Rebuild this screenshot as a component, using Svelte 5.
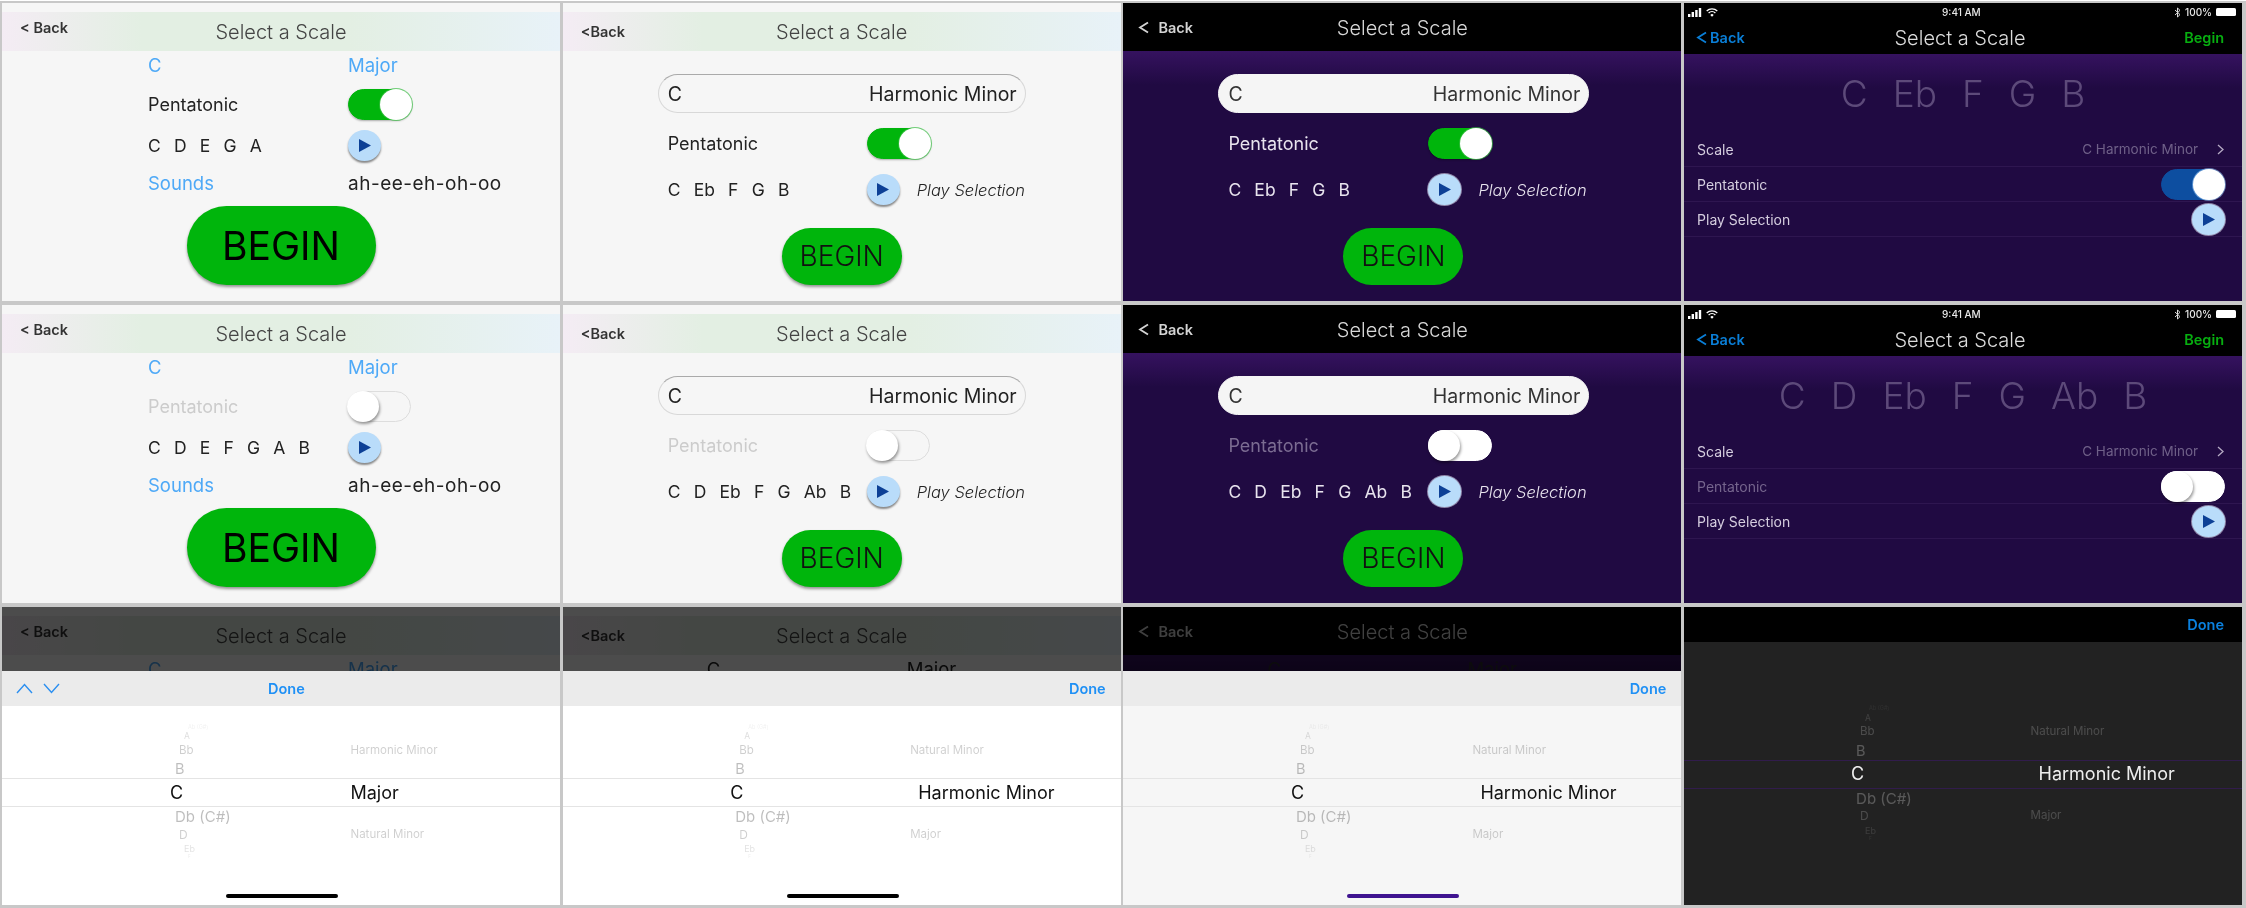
<script>
  const penta = ['C', 'Eb', 'F', 'G', 'B'];
  const full = ['C', 'D', 'Eb', 'F', 'G', 'Ab', 'B'];

  // picker wheel: rows shrink and drift right away from the selected row
  const wheelRows = [
    { h: 7, x: 186, size: 5.5, op: 0.06, note: 'Ab (G#)' },
    { h: 11, x: 182, size: 8.5, op: 0.14, note: 'A' },
    { h: 17, x: 177, size: 11.5, op: 0.2, note: 'Bb', slot: 'top' },
    { h: 21, x: 173, size: 14.5, op: 0.27, note: 'B' },
    { h: 25, x: 168, size: 18, op: 1, note: 'C', slot: 'mid' },
    { h: 23, x: 173, size: 15, op: 0.27, note: 'Db (C#)' },
    { h: 13, x: 177, size: 12, op: 0.2, note: 'D', slot: 'bottom' },
    { h: 15, x: 182, size: 9, op: 0.12, note: 'Eb' },
    { h: 3, x: 186, size: 4.5, op: 0.08, note: 'F' }
  ];

  const majorPick = { top: 'Harmonic Minor', mid: 'Major', bottom: 'Natural Minor', midX: 0 };
  const harmonicPick = { top: 'Natural Minor', mid: 'Harmonic Minor', bottom: 'Major', midX: 8 };
</script>

{#snippet play()}
  <span class="play">
    <svg width="14" height="15" viewBox="0 0 14 15"><polygon points="1,1 13,7.5 1,14" fill="#0d4096" /></svg>
  </span>
{/snippet}

{#snippet toggle(on)}
  <span class="toggle" class:on><span class="thumb"></span></span>
{/snippet}

{#snippet notes(list)}
  <span class="notes">
    {#each list as n}<span>{n}</span>{/each}
  </span>
{/snippet}

{#snippet chevronLeft()}
  <svg class="back-chev" width="11" height="13" viewBox="0 0 11 13" fill="none" stroke="currentColor" stroke-width="1.8"><path d="M10 1.5 2 6.5l8 5" /></svg>
{/snippet}

{#snippet nav(kind)}
  <header class="nav {kind}">
    {#if kind === 'spaced'}
      <span class="back raised">&lt; Back</span>
    {:else if kind === 'tight'}
      <span class="back">&lt;Back</span>
    {:else}
      <span class="back raised">{@render chevronLeft()}Back</span>
    {/if}
    <span class="title">Select a Scale</span>
  </header>
{/snippet}

{#snippet classic(list, on)}
  <section class="screen paper">
    {@render nav('spaced')}
    <div class="classic">
      <span class="link">C</span><span class="link">Major</span>
      <span class="label" class:off={!on}>Pentatonic</span>{@render toggle(on)}
      {@render notes(list)}{@render play()}
      <span class="link">Sounds</span><span class="label sounds">ah-ee-eh-oh-oo</span>
    </div>
    <div class="begin-wrap big-wrap"><button class="begin big">BEGIN</button></div>
  </section>
{/snippet}

{#snippet field(theme, list, on)}
  <section class="screen {theme}">
    {@render nav(theme === 'paper' ? 'tight' : 'dark')}
    <div class="form">
      <div class="field"><span>C</span><span>Harmonic Minor</span></div>
      <div class="form-row">
        <span class="label" class:off={!on}>Pentatonic</span>{@render toggle(on)}
      </div>
      <div class="form-row">
        {@render notes(list)}{@render play()}<em>Play Selection</em>
      </div>
    </div>
    <div class="begin-wrap"><button class="begin">BEGIN</button></div>
  </section>
{/snippet}

{#snippet native(list, on)}
  <section class="screen night native">
    <div class="status">
      <span class="status-left">
        <svg width="14" height="9" viewBox="0 0 14 9" fill="#fff"><rect x="0" y="6" width="2.4" height="3" /><rect x="3.6" y="4" width="2.4" height="5" /><rect x="7.2" y="2" width="2.4" height="7" /><rect x="10.8" y="0" width="2.4" height="9" /></svg>
        <svg width="12" height="9" viewBox="0 0 12 9" fill="none" stroke="#fff" stroke-width="1.3"><path d="M.7 3a7.6 7.6 0 0 1 10.6 0M2.6 5a5 5 0 0 1 6.8 0" /><path d="M6 8.8 4.3 6.9a2.4 2.4 0 0 1 3.4 0z" fill="#fff" stroke="none" /></svg>
      </span>
      <span class="time">9:41 AM</span>
      <span class="status-right">
        <svg width="7" height="11" viewBox="0 0 7 11" fill="none" stroke="#ddd" stroke-width="1"><path d="M1 3l5 4.6L3.5 10V1L6 3.4 1 8" /></svg>
        <span>100%</span>
        <span class="battery"></span>
      </span>
    </div>
    <header class="bar">
      <span class="bar-back">{@render chevronLeft()}Back</span>
      <span class="title">Select a Scale</span>
      <span class="bar-begin">Begin</span>
    </header>
    <div class="giant">
      {#each list as n}<span>{n}</span>{/each}
    </div>
    <ul class="list">
      <li>
        <span>Scale</span>
        <span class="value">C Harmonic Minor
          <svg width="7" height="11" viewBox="0 0 7 11" fill="none" stroke="#b5aac4" stroke-width="1.3"><path d="M1 1l5 4.5L1 10" /></svg>
        </span>
      </li>
      <li><span class:off={!on}>Pentatonic</span>{@render toggle(on)}</li>
      <li><span>Play Selection</span>{@render play()}</li>
    </ul>
  </section>
{/snippet}

{#snippet wheel(pick, shift, base)}
  <div class="wheel">
    {#each wheelRows as r}
      <div class="wheel-row" class:picked={r.slot === 'mid'} style:height="{r.h}px">
        <span class="cell" style:width="{base}px" style:padding-left="{r.x + shift}px" style:font-size="{r.size}px" style:opacity={r.op}>{r.note}</span>
        {#if r.slot === 'mid'}
          <span class="cell mid" style:padding-left="{pick.midX}px">{pick.mid}</span>
        {:else if r.slot}
          <span class="cell side">{pick[r.slot]}</span>
        {/if}
      </div>
    {/each}
  </div>
{/snippet}

{#snippet sheet(kind, theme, pick, shift, base, linkText)}
  <section class="screen sheet {theme}">
    <div class="dimmed">
      {@render nav(kind)}
      <div class="peek" class:ink={linkText}><span>C</span><span>Major</span></div>
    </div>
    <div class="toolbar" class:arrows={kind === 'spaced'}>
      {#if kind === 'spaced'}
        <span class="arrow-pair">
          <svg width="17" height="11" viewBox="0 0 17 11" fill="none" stroke="#2b8ff0" stroke-width="1.4"><path d="M1 10l7.5-8.5L16 10" /></svg>
          <svg width="17" height="11" viewBox="0 0 17 11" fill="none" stroke="#2b8ff0" stroke-width="1.4"><path d="M1 1l7.5 8.5L16 1" /></svg>
        </span>
      {/if}
      <span class="done">Done</span>
    </div>
    {@render wheel(pick, shift, base)}
    <span class="home"></span>
  </section>
{/snippet}

<main class="board">
  {@render classic(['C', 'D', 'E', 'G', 'A'], true)}
  {@render field('paper', penta, true)}
  {@render field('night', penta, true)}
  {@render native(penta, true)}

  {@render classic(['C', 'D', 'E', 'F', 'G', 'A', 'B'], false)}
  {@render field('paper', full, false)}
  {@render field('night', full, false)}
  {@render native(full, false)}

  {@render sheet('spaced', 'paper white', majorPick, 0, 348.5, false)}
  {@render sheet('tight', 'paper white', harmonicPick, -0.5, 347.5, true)}
  {@render sheet('dark', 'night', harmonicPick, -0.5, 349, true)}

  <section class="screen blackout">
    <div class="blackout-bar"><span class="done">Done</span></div>
    {@render wheel(harmonicPick, -1, 346.5)}
  </section>
</main>

<style>
  :global(body) {
    margin: 0;
    background: #fff;
  }

  .board {
    width: 2246px;
    height: 908px;
    box-sizing: border-box;
    padding: 3px 0 0 2px;
    display: grid;
    grid-template-columns: repeat(4, 558px);
    grid-template-rows: repeat(3, 298px);
    column-gap: 2.7px;
    row-gap: 4px;
    background: linear-gradient(#fff 1px, #c8c8c8 1px);
    font-family: Inter, "Liberation Sans", sans-serif;
    filter: blur(0.4px);
    overflow: hidden;
  }

  .screen {
    position: relative;
    overflow: hidden;
    display: flex;
    flex-direction: column;
  }

  .paper {
    background: #f6f6f6;
    color: #222;
  }

  .night {
    background: linear-gradient(#35125f, #200a42 34px) 0 48px / 100% 100% no-repeat #200a42;
    color: #e8e4ee;
  }

  /* nav */
  .nav {
    flex: none;
    display: grid;
    grid-template-columns: 1fr auto 1fr;
    align-items: center;
    height: 39px;
    margin-top: 9px;
    background: linear-gradient(90deg, #f4ecf4, #e3efe3 25%, #e3efe3 62%, #e8f2f8);
  }

  .nav.dark {
    height: 48px;
    margin-top: 0;
    background: #000;
  }

  .title {
    font-size: 20px;
    font-weight: 300;
    color: #444;
    grid-column: 2;
    grid-row: 1;
  }

  .dark .title {
    color: #d8d8d8;
    position: relative;
    top: 1px;
  }

  .back {
    grid-column: 1;
    grid-row: 1;
    padding-left: 18px;
    font-size: 14.5px;
    font-weight: 600;
    color: #333;
    display: flex;
    align-items: center;
  }

  .raised {
    margin-bottom: 8px;
  }

  .dark .raised {
    margin-bottom: 0;
    padding-left: 15px;
    color: #d4d4d4;
  }

  .back-chev {
    margin-right: 9px;
  }

  /* shared controls */
  .label {
    font-size: 18px;
  }

  .sounds {
    font-size: 19px;
    letter-spacing: 0.5px;
  }

  .off {
    color: #ccc;
  }

  .night .off {
    color: #7b6c92;
  }

  .link {
    font-size: 18.5px;
    color: #4ea9f7;
  }

  .notes {
    display: flex;
    gap: 13.2px;
    font-size: 17.5px;
  }

  .toggle {
    display: block;
    box-sizing: border-box;
    width: 64px;
    height: 31px;
    border-radius: 16px;
    border: 1px solid #ddd;
    position: relative;
  }

  .paper .toggle:not(.on) {
    transform: translateX(-1px);
  }

  .toggle.on {
    background: #00b50c;
    border-color: #00b50c;
    box-shadow: 0 1px 2px rgba(0, 0, 0, 0.3);
  }

  .night .toggle:not(.on) {
    background: #fff;
    border-color: #fff;
  }

  .thumb {
    position: absolute;
    top: -1px;
    left: -1px;
    width: 32px;
    height: 31px;
    border-radius: 50%;
    background: #fff;
    box-shadow: 1px 2px 3px rgba(0, 0, 0, 0.4);
  }

  .on .thumb {
    left: auto;
    right: -1px;
    box-shadow: 0 0 0 1px rgba(60, 190, 70, 0.7);
  }

  .play {
    display: flex;
    align-items: center;
    justify-content: center;
    width: 33px;
    height: 31px;
    border-radius: 50%;
    background: #b9dcfa;
    box-shadow: 0 2px 2px rgba(0, 0, 0, 0.45);
  }

  .night .play {
    box-shadow: 0 0 0 1px #8f86a8;
  }

  .begin-wrap {
    display: flex;
    justify-content: center;
    margin-top: 22.5px;
  }

  .night .begin-wrap {
    padding-left: 2px;
  }

  .big-wrap {
    margin-top: 1px;
  }

  .begin {
    width: 120px;
    height: 57px;
    border: 0;
    border-radius: 29px;
    background: #00b50c;
    color: #111;
    font: 300 28px Inter, "Liberation Sans", sans-serif;
    box-shadow: 0 2px 3px rgba(0, 0, 0, 0.4);
  }

  .night .begin {
    box-shadow: none;
  }

  .begin.big {
    width: 189px;
    height: 79px;
    border-radius: 40px;
    font-size: 39px;
    font-weight: 400;
    color: #000;
  }

  /* first column */
  .classic {
    display: grid;
    grid-template-columns: 200px 1fr;
    grid-template-rows: 28px 50px 32px 44px;
    align-items: center;
    padding-left: 146px;
  }

  /* second + third column */
  .form {
    padding: 23px 0 0 105px;
  }

  .field {
    display: flex;
    justify-content: space-between;
    align-items: center;
    box-sizing: border-box;
    width: 368px;
    height: 39px;
    margin-left: -10px;
    padding: 0 8px 0 9px;
    border-radius: 20px;
    border: 1px solid #d8d8d8;
    border-top-color: #aaa;
    font-size: 19.5px;
  }

  .night .field {
    width: 371px;
    background: #f5f5f5;
    border-color: #f5f5f5;
    color: #333;
  }

  .form-row {
    display: grid;
    grid-template-columns: 199px auto 1fr;
    align-items: center;
    height: 31px;
    margin-top: 15px;
  }

  .night .form-row {
    grid-template-columns: 200px auto 1fr;
  }

  .form-row em {
    margin-left: 17px;
    font-size: 16.5px;
    font-weight: 300;
  }

  /* native column */
  .native {
    background-position: 0 51px;
  }

  .status {
    display: flex;
    justify-content: space-between;
    align-items: center;
    height: 18px;
    padding: 0 6px 0 4px;
    background: #000;
    color: #e8e8e8;
    font-size: 10px;
    font-weight: 500;
    position: relative;
  }

  .status-left,
  .status-right {
    display: flex;
    align-items: center;
    gap: 4px;
  }

  .time {
    position: absolute;
    left: 258px;
  }

  .battery {
    width: 20px;
    height: 8px;
    border-radius: 1.5px;
    background: #fff;
  }

  .bar {
    flex: none;
    display: grid;
    grid-template-columns: 1fr auto 1fr;
    align-items: center;
    height: 33px;
    padding: 0 18px 0 12px;
    background: #000;
  }

  .bar .title {
    color: #dcdcdc;
  }

  .bar-back {
    display: flex;
    align-items: center;
    color: #0a7fd8;
    font-size: 14.5px;
    font-weight: 600;
  }

  .bar-back .back-chev {
    margin-right: 3px;
  }

  .bar-begin {
    justify-self: end;
    grid-column: 3;
    color: #07ae10;
    font-size: 14.5px;
    font-weight: 600;
  }

  .giant {
    flex: none;
    height: 78px;
    display: flex;
    justify-content: center;
    align-items: center;
    gap: 25px;
    font-size: 37px;
    font-weight: 300;
    color: #5d4a7a;
  }

  .list {
    list-style: none;
    margin: 0;
    padding: 0;
    font-size: 14px;
    color: #d5cedf;
  }

  .list li {
    display: flex;
    justify-content: space-between;
    align-items: center;
    box-sizing: border-box;
    height: 35px;
    padding: 0 17px 0 13px;
    border-bottom: 1px solid #2e1650;
  }

  .list .off {
    color: #75658d;
  }

  .list .toggle.on {
    background: #0d4ea0;
    border-color: #0d4ea0;
    box-shadow: none;
  }

  .list .on .thumb {
    box-shadow: 0 0 0 1px rgba(140, 190, 240, 0.6);
  }

  .value {
    display: flex;
    align-items: center;
    gap: 19px;
    color: #6f6088;
    margin-right: 1px;
    font-size: 13.5px;
  }

  /* picker sheets */
  .dimmed {
    flex: none;
    height: 64px;
    overflow: hidden;
    position: relative;
  }

  .dimmed::after {
    content: "";
    position: absolute;
    inset: 0;
    background: rgba(0, 0, 0, 0.7);
  }

  .peek {
    display: grid;
    grid-template-columns: 200px 1fr;
    align-items: center;
    height: 28px;
    padding-left: 146px;
    color: #4ea9f7;
    font-size: 18.5px;
  }

  .peek.ink {
    color: #222;
    padding-left: 144px;
  }

  .night .peek.ink {
    color: #2a2a2a;
  }

  .toolbar {
    flex: none;
    display: flex;
    justify-content: flex-end;
    align-items: center;
    height: 35px;
    padding-right: 15px;
    background: #ebebeb;
  }

  .toolbar.arrows {
    justify-content: flex-start;
    padding: 0;
  }

  .arrow-pair {
    display: flex;
    gap: 10px;
    padding-left: 14px;
    width: 266px;
    box-sizing: border-box;
  }

  .done {
    color: #1f90f5;
    font-size: 14.5px;
    font-weight: 600;
  }

  .white {
    background: #fff;
  }

  .sheet.night {
    background: #f6f6f6;
    color: #111;
  }

  .sheet.night .dimmed {
    background: linear-gradient(#35125f, #200a42 34px) 0 48px / 100% 100% no-repeat #200a42;
  }

  .wheel {
    padding-top: 18px;
    color: #111;
  }

  .wheel-row {
    display: flex;
    align-items: center;
    position: relative;
    line-height: 1;
    white-space: nowrap;
  }

  .cell {
    box-sizing: border-box;
  }

  .mid {
    font-size: 18px;
  }

  .side {
    font-size: 11.5px;
    opacity: 0.2;
  }

  .picked::before {
    content: "";
    position: absolute;
    left: 0;
    right: 0;
    top: -2px;
    bottom: -2px;
    border-top: 1px solid #e4e4e4;
    border-bottom: 1px solid #e4e4e4;
  }

  .home {
    position: absolute;
    left: 224px;
    bottom: 7px;
    width: 112px;
    height: 4px;
    border-radius: 2px;
    background: #000;
  }

  .night .home {
    background: #3f1490;
  }

  .blackout {
    background: #222;
  }

  .blackout-bar {
    flex: none;
    display: flex;
    justify-content: flex-end;
    align-items: center;
    height: 35px;
    padding-right: 18px;
    background: #000;
  }

  .blackout-bar .done {
    color: #0a80de;
  }

  .blackout .wheel {
    padding-top: 63.5px;
    color: #eee;
  }

  .blackout .picked::before {
    border-color: #311c4c;
  }
</style>
